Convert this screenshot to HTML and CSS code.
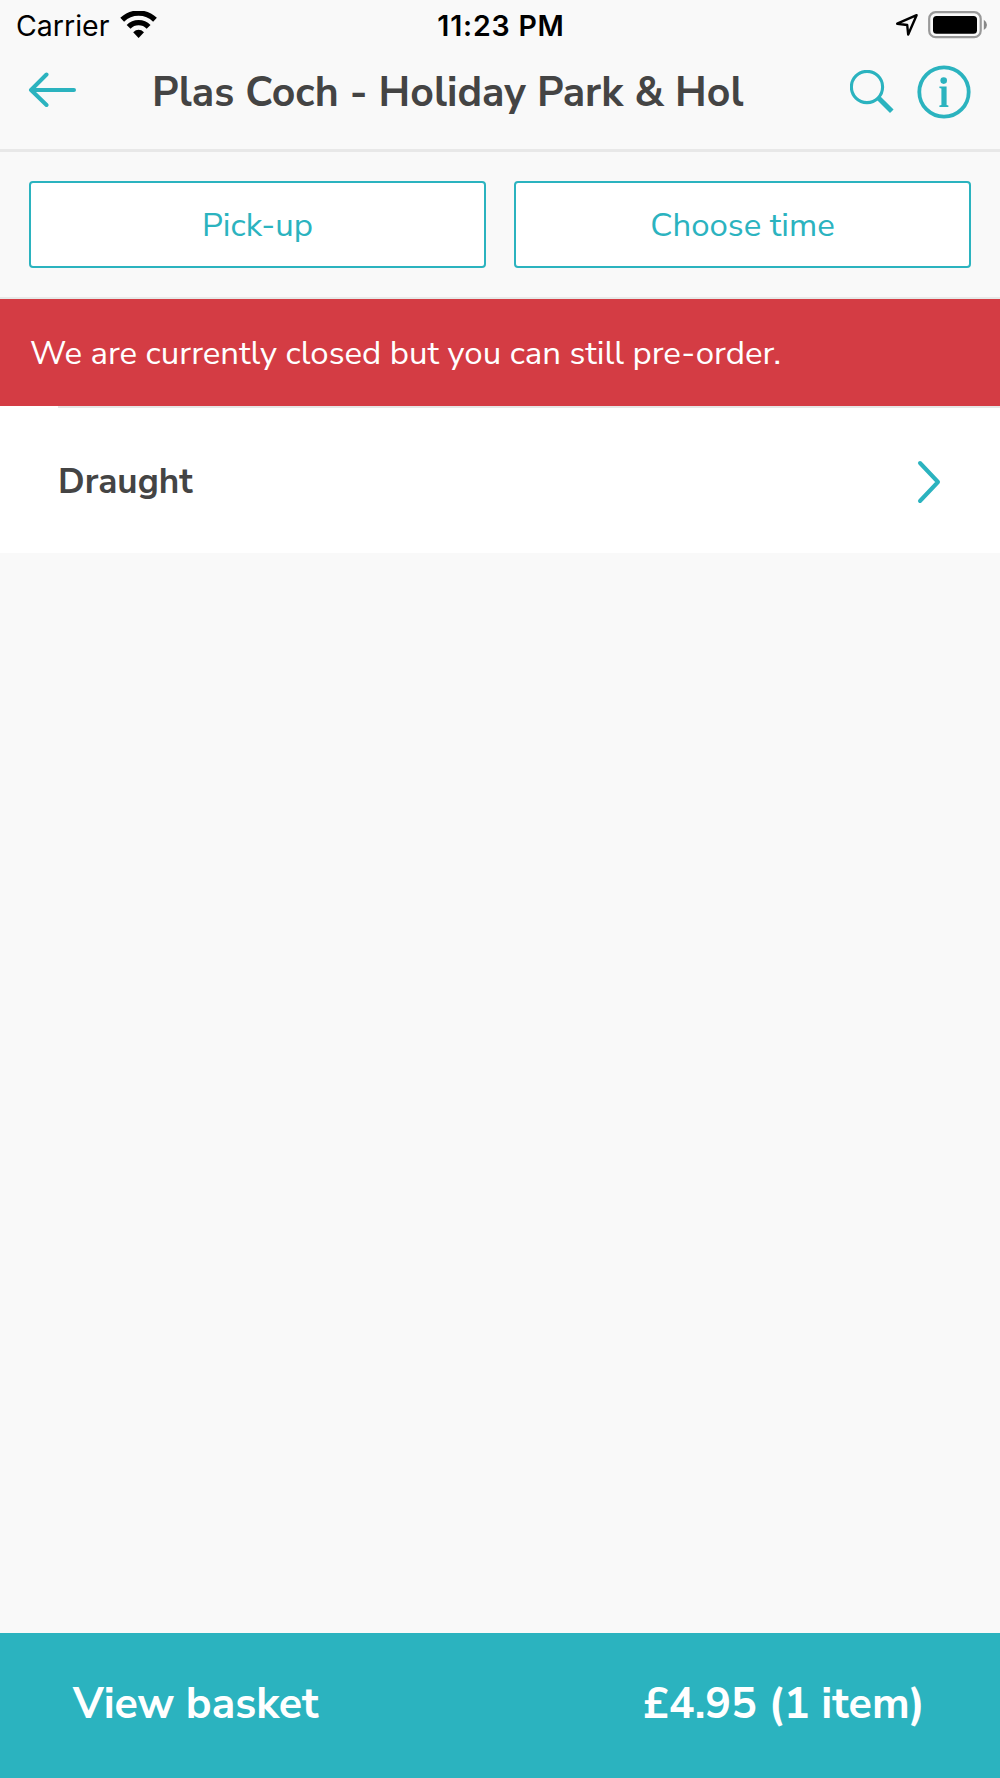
FILE: index.html
```html
<!DOCTYPE html>
<html lang="en">
<head>
  <meta charset="UTF-8" />
  <meta name="viewport" content="width=device-width, initial-scale=1.0"/>
  <title>Plas Coch</title>
  <link rel="stylesheet" href="styles.css">
</head>
<body>
  <div class="app">
    <div class="status-bar">
      <div class="status-left">
        <span class="carrier">Carrier</span>
        <svg class="wifi" width="38" height="28" viewBox="0 0 38 28">
          <path d="M2.2 8.8 A23.5 23.5 0 0 1 35 8.8" fill="none" stroke="#000" stroke-width="5.4"/>
          <path d="M8.6 15.8 A14 14 0 0 1 28.6 15.8" fill="none" stroke="#000" stroke-width="5.4"/>
          <path d="M13.2 21.2 Q18.6 16.4 24 21.2 L18.6 27 Z"/>
        </svg>
      </div>
      <span class="clock">11:23 PM</span>
      <div class="status-right">
        <svg width="24" height="24" viewBox="0 0 24 24">
          <path d="M21.6 2.2 L2.2 10.7 L12.2 12 L13.2 21.6 Z" fill="none" stroke="#000" stroke-width="2.4" stroke-linejoin="round"/>
        </svg>
        <svg width="60" height="28" viewBox="0 0 60 28">
          <rect x="1.2" y="1.2" width="51.5" height="25" rx="6.5" fill="none" stroke="#999" stroke-width="2.2"/>
          <rect x="5" y="5" width="44" height="17.8" rx="3.5"/>
          <path d="M55.8 8.8 Q59 11 59 14 Q59 17 55.8 19 Z" fill="#888"/>
        </svg>
      </div>
    </div>

    <div class="header">
      <svg class="back" width="48" height="36" viewBox="0 0 48 36" fill="none" stroke="#2bb3bf" stroke-width="4" stroke-linecap="round" stroke-linejoin="round">
        <path d="M18.5 2.5 L3 18 L18.5 33 M3 18 H46"/>
      </svg>
      <h1 class="title">Plas Coch - Holiday Park &amp; Hol</h1>
      <div class="header-icons">
        <svg width="44" height="44" viewBox="0 0 44 44" fill="none" stroke="#2bb3bf">
          <circle cx="17" cy="17" r="15.6" stroke-width="3.1"/>
          <path d="M28 27.5 L41.8 41.3" stroke-width="5"/>
        </svg>
        <svg width="54" height="54" viewBox="0 0 54 54" fill="#2bb3bf">
          <circle cx="27" cy="27" r="24.7" fill="none" stroke="#2bb3bf" stroke-width="3.8"/>
          <circle cx="26.7" cy="15.6" r="3.3"/>
          <path d="M22.4 21.6 H29.6 V40 L31.4 40.5 V42 H22.4 V40.5 L24.4 40 V23.4 L22.4 23 Z"/>
        </svg>
      </div>
    </div>

    <div class="options">
      <button class="option">Pick-up</button>
      <button class="option">Choose time</button>
    </div>

    <div class="notice"><span>We are currently closed but you can still pre-order.</span></div>

    <div class="category">
      <span class="category-name">Draught</span>
      <svg width="24" height="44" viewBox="0 0 24 44" fill="none" stroke="#2bb3bf" stroke-width="4" stroke-linecap="round" stroke-linejoin="round">
        <path d="M3 3 L21 22 L3 41"/>
      </svg>
    </div>

    <div class="basket">
      <span class="basket-label">View basket</span>
      <span class="basket-total">£4.95 (1 item)</span>
    </div>
  </div>
</body>
</html>
```
FILE: styles.css
```css
* {
  margin: 0;
  padding: 0;
  box-sizing: border-box;
}

body {
  font-family: 'Nunito Sans', Nunito, 'Noto Sans', sans-serif;
  background: #f9f9f9;
  color: #444;
}

svg {
  display: block;
  flex-shrink: 0;
}

.app {
  display: flex;
  flex-direction: column;
  height: 100vh;
  overflow: hidden;
}

.status-bar {
  display: grid;
  grid-template-columns: 1fr auto 1fr;
  align-items: center;
  height: 50px;
  padding: 0 12px 0 16px;
  font-family: Inter, sans-serif;
  font-size: 28.5px;
  color: #000;
}

.status-left,
.status-right {
  display: flex;
  align-items: center;
}

.status-left { gap: 11px; }

.status-right {
  justify-content: flex-end;
  gap: 9px;
}

.clock {
  font-weight: 600;
  letter-spacing: 0.8px;
  margin-right: 2px;
}

.header {
  display: flex;
  align-items: center;
  height: 102px;
  padding: 0 29px 17px 28px;
  border-bottom: 3px solid #e8e8e8;
}

.back {
  margin-bottom: 2px;
}

.title {
  flex: 1;
  padding: 2px 0 0 76px;
  font-size: 41px;
  font-weight: 700;
  white-space: nowrap;
}

.header-icons {
  display: flex;
  align-items: center;
  gap: 23px;
  padding-top: 1px;
}

.options {
  display: flex;
  gap: 28px;
  height: 147px;
  padding: 29px 29px 29px;
  border-bottom: 2px solid #e6e9e8;
}

.option {
  flex: 1;
  padding-top: 2px;
  border: 2px solid #2bb3bf;
  border-radius: 4px;
  background: #fff;
  color: #2bb3bf;
  font-family: inherit;
  font-size: 33px;
  font-weight: 400;
}

.notice {
  display: flex;
  align-items: center;
  height: 107px;
  padding: 2px 0 0 30px;
  background: #d43c44;
  color: #fff;
  font-size: 33px;
  font-weight: 400;
  white-space: nowrap;
}

.category {
  display: flex;
  align-items: center;
  justify-content: space-between;
  height: 147px;
  padding: 4px 59px 0 58px;
  background: linear-gradient(#e6e6e6, #e6e6e6) 58px 0 / 100% 2px no-repeat #fff;
  font-size: 35px;
  font-weight: 700;
}

.basket {
  display: flex;
  align-items: center;
  justify-content: space-between;
  height: 145px;
  margin-top: auto;
  padding: 0 75px 4px 73px;
  background: #2bb3bf;
  color: #fff;
  font-size: 43px;
  font-weight: 700;
}
```
